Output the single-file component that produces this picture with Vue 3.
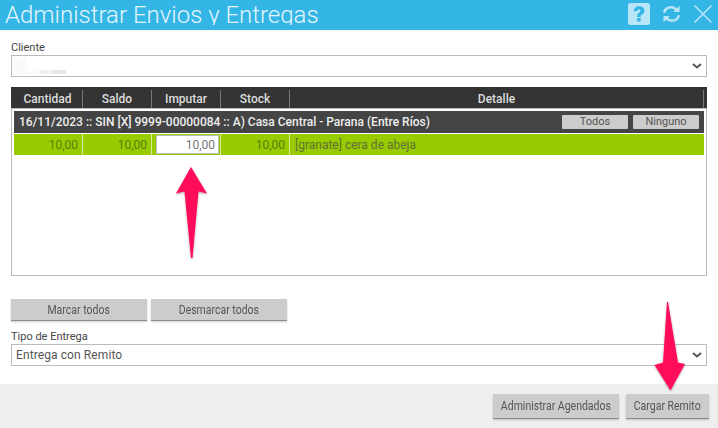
<script setup>
const columns = [
  { label: 'Cantidad', cls: 'num' },
  { label: 'Saldo', cls: 'num' },
  { label: 'Imputar', cls: 'num' },
  { label: 'Stock', cls: 'num' },
  { label: 'Detalle', cls: 'detail' }
]
</script>

<template>
  <div class="dialog">
    <header class="title-bar">
      <h1 class="title">Administrar Envios y Entregas</h1>
      <div class="title-icons">
        <svg class="ic" width="22" height="22" viewBox="0 0 22 22">
          <rect width="22" height="22" rx="2.5" fill="#b8e5f7" />
          <path d="M5.6 8C5.8 4.900 8 3.300 11.100 3.300c3.100 0 5.300 1.700 5.300 4.400 0 1.900-1 2.900-2.400 3.800-1.100.7-1.400 1.200-1.400 2.400H9c0-2.100.6-3.100 2-4.100 1-.7 1.500-1.200 1.500-2-.0-.9-.6-1.400-1.500-1.400-1.100 0-1.700.6-1.900 1.800z" fill="#33b5e5" />
          <rect x="9" y="15" width="3.600" height="3.400" fill="#33b5e5" />
        </svg>
        <svg class="ic ic-sync" width="19" height="20" viewBox="0 0 20 20" fill="none">
          <path d="M2.200 8.600C3 5 6 2.800 9.600 2.800c2.300 0 4.200 1 5.500 2.600" stroke="#b8e5f7" stroke-width="2.600" />
          <path d="M18.400 1.200v6.600h-6.600z" fill="#b8e5f7" />
          <path d="M17.800 11.400C17 15 14 17.200 10.400 17.200c-2.300 0-4.200-1-5.500-2.600" stroke="#b8e5f7" stroke-width="2.600" />
          <path d="M1.600 18.800v-6.600h6.600z" fill="#b8e5f7" />
        </svg>
        <svg class="ic ic-close" width="18" height="18" viewBox="0 0 18 18" fill="none">
          <path d="M.5.500l17 17M17.500.500l-17 17" stroke="#c4eafa" stroke-width="1.400" />
        </svg>
      </div>
    </header>

    <main class="content">
      <label class="field-label first">Cliente</label>
      <div class="client-wrap">
        <select class="select"><option></option></select>
        <span class="blur blur-a"></span>
        <span class="blur blur-b"></span>
        <span class="blur blur-c"></span>
      </div>

      <div class="grid-head">
        <div v-for="c in columns" :key="c.label" class="head-cell" :class="c.cls">{{ c.label }}</div>
      </div>

      <div class="grid-body">
        <div class="group-row">
          <span class="group-title">16/11/2023 :: SIN [X] 9999-00000084 :: A) Casa Central - Parana (Entre Ríos)</span>
          <button class="mini">Todos</button>
          <button class="mini">Ninguno</button>
        </div>
        <div class="item-row">
          <div class="cell num">10,00</div>
          <div class="cell num">10,00</div>
          <div class="cell num input-cell"><input class="qty" value="10,00" /></div>
          <div class="cell num">10,00</div>
          <div class="cell detail-cell">[granate] cera de abeja</div>
        </div>
      </div>

      <div class="mark-buttons">
        <button class="btn wide"><span class="narrow">Marcar todos</span></button>
        <button class="btn wide"><span class="narrow">Desmarcar todos</span></button>
      </div>

      <label class="field-label second">Tipo de Entrega</label>
      <select class="select text-select"><option>Entrega con Remito</option></select>
    </main>

    <footer class="footer">
      <button class="btn foot-a"><span class="narrow">Administrar Agendados</span></button>
      <button class="btn foot-b"><span class="narrow">Cargar Remito</span></button>
    </footer>

    <svg class="arrows" width="718" height="428" viewBox="0 0 718 428">
      <defs>
        <filter id="sh" x="-30%" y="-30%" width="160%" height="160%">
          <feDropShadow dx="0" dy="1" stdDeviation="1" flood-color="#000" flood-opacity=".35" />
        </filter>
      </defs>
      <path d="M191 167L207 193.500L198.500 191.500L192.500 258H191L184.500 191.500L176 193.500z" fill="#ff0a5a" filter="url(#sh)" />
      <path d="M667 302H668L678 362.500L685 364L670.500 390.500L654.500 365L663 362.500z" fill="#ff0a5a" filter="url(#sh)" />
    </svg>
  </div>
</template>

<style>
html, body { margin: 0; background: #fff; }
</style>

<style scoped>
.dialog {
  position: relative;
  width: 718px;
  height: 428px;
  overflow: hidden;
  display: flex;
  flex-direction: column;
  font-family: Roboto, "Liberation Sans", sans-serif;
  color: #555;
  background: #fff;
}
.title-bar {
  flex: none;
  height: 30px;
  overflow: hidden;
  display: flex;
  align-items: flex-start;
  justify-content: space-between;
  background: #33b5e5;
}
.title {
  margin: 0 0 0 5px;
  font-size: 24px;
  font-weight: 300;
  line-height: 30px;
  height: 25px;
  overflow: hidden;
  color: #e4f6fd;
  white-space: nowrap;
}
.title-icons { display: flex; align-items: flex-start; margin: 3px 6px 0 0; }
.ic-sync { margin: 1px 0 0 12px; }
.ic-close { margin: 2px 0 0 13px; }
.content { flex: 1; padding: 0 11px; min-height: 0; }
.field-label {
  display: block;
  font-size: 11px;
  line-height: 13px;
  color: #444;
}
.field-label.first { margin-top: 11px; }
.field-label.second { margin: 10px 0 1px; }
.client-wrap { position: relative; margin-top: 1px; }
.select {
  display: block;
  width: 696px;
  height: 22px;
  box-sizing: border-box;
  margin: 0;
  padding: 0 20px 0 4px;
  border: 1px solid #bbb;
  border-radius: 0;
  appearance: none;
  background: #fff url("data:image/svg+xml,%3Csvg xmlns='http://www.w3.org/2000/svg' width='10' height='6' viewBox='0 0 10 6'%3E%3Cpath d='M1 1l4 3.500L9 1' fill='none' stroke='%23555' stroke-width='2'/%3E%3C/svg%3E") no-repeat right 4px center;
  font-family: inherit;
  font-size: 12px;
  color: #555;
  outline: none;
}
.text-select { letter-spacing: .1px; }
.blur { position: absolute; }
.blur-a { left: 3px; top: 2px; width: 13px; height: 18px; background: #fafafa; }
.blur-b { left: 16px; top: 15px; width: 12px; height: 4px; background: #fbfbfb; }
.blur-c { left: 29px; top: 15px; width: 26px; height: 4px; background: linear-gradient(90deg, #f0f0f0 50%, #e6e6e6 50%); }
.grid-head {
  display: flex;
  margin-top: 10px;
  height: 21px;
  background: #333;
  width: 696px;
  box-sizing: border-box;
  padding-top: 3px;
}
.head-cell {
  height: 18px;
  line-height: 18px;
  font-size: 12px;
  font-weight: 500;
  color: #ddd;
  text-align: center;
  border-right: 1px solid #777;
  box-sizing: border-box;
}
.head-cell.num { width: 69px; }
.head-cell.num:first-child { width: 72px; padding-left: 2px; }
.head-cell.detail { flex: 1; margin-right: 3px; }
.grid-body {
  width: 696px;
  height: 168px;
  box-sizing: border-box;
  border: 1px solid #bbb;
  padding: 2px 2px 0;
}
.group-row {
  height: 22px;
  display: flex;
  align-items: center;
  background: #444;
  box-sizing: border-box;
  padding: 0 5px 0 5px;
  gap: 5px;
}
.group-title {
  flex: 1;
  font-size: 12px;
  font-weight: 500;
  color: #eee;
  white-space: nowrap;
}
.mini {
  width: 66px;
  height: 14px;
  margin: 0;
  padding: 0;
  border: 0;
  border-radius: 1px;
  background: #ccc;
  font-family: inherit;
  font-size: 11px;
  line-height: 14px;
  color: #555;
}
.item-row {
  display: flex;
  height: 21px;
  margin-top: 1px;
  background: #99cc00;
  font-size: 12px;
  line-height: 23px;
  color: #5a7d10;
}
.cell { box-sizing: border-box; border-right: 1px solid #d8e8a0; height: 21px; }
.cell.num { width: 69px; text-align: right; padding-right: 4px; }
.cell.input-cell { padding: 1px 2px; }
.qty {
  display: block;
  width: 63px;
  height: 19px;
  box-sizing: border-box;
  margin: 0 0 0 2px;
  padding: 0 3px 0 0;
  border: 1px solid #bbb;
  background: #fff;
  font-family: inherit;
  font-size: 12px;
  text-align: right;
  color: #777;
  outline: none;
  box-shadow: inset 0 0 0 1px #fff;
}
.detail-cell { flex: 1; border-right: 0; padding-left: 5px; color: #62703a; }
.mark-buttons { display: flex; gap: 4px; margin-top: 23px; }
.btn {
  margin: 0;
  padding: 0;
  border: 0;
  border-radius: 0;
  background: #ccc;
  font-family: inherit;
  font-size: 12px;
  color: #555;
  box-shadow: 0 1px 0 #8c8c8c, 0 2px 2px rgba(0, 0, 0, .2);
}
.narrow { display: inline-block; white-space: nowrap; transform: scaleX(.875); }
.wide { width: 136px; height: 21px; }
.footer {
  flex: none;
  height: 44px;
  box-sizing: border-box;
  display: flex;
  justify-content: flex-end;
  align-items: flex-start;
  gap: 7px;
  padding: 10px 9px 0 0;
  background: #eee;
}
.foot-a { width: 126px; height: 24px; }
.foot-b { width: 83px; height: 24px; }
.arrows { position: absolute; left: 0; top: 0; pointer-events: none; }
</style>
